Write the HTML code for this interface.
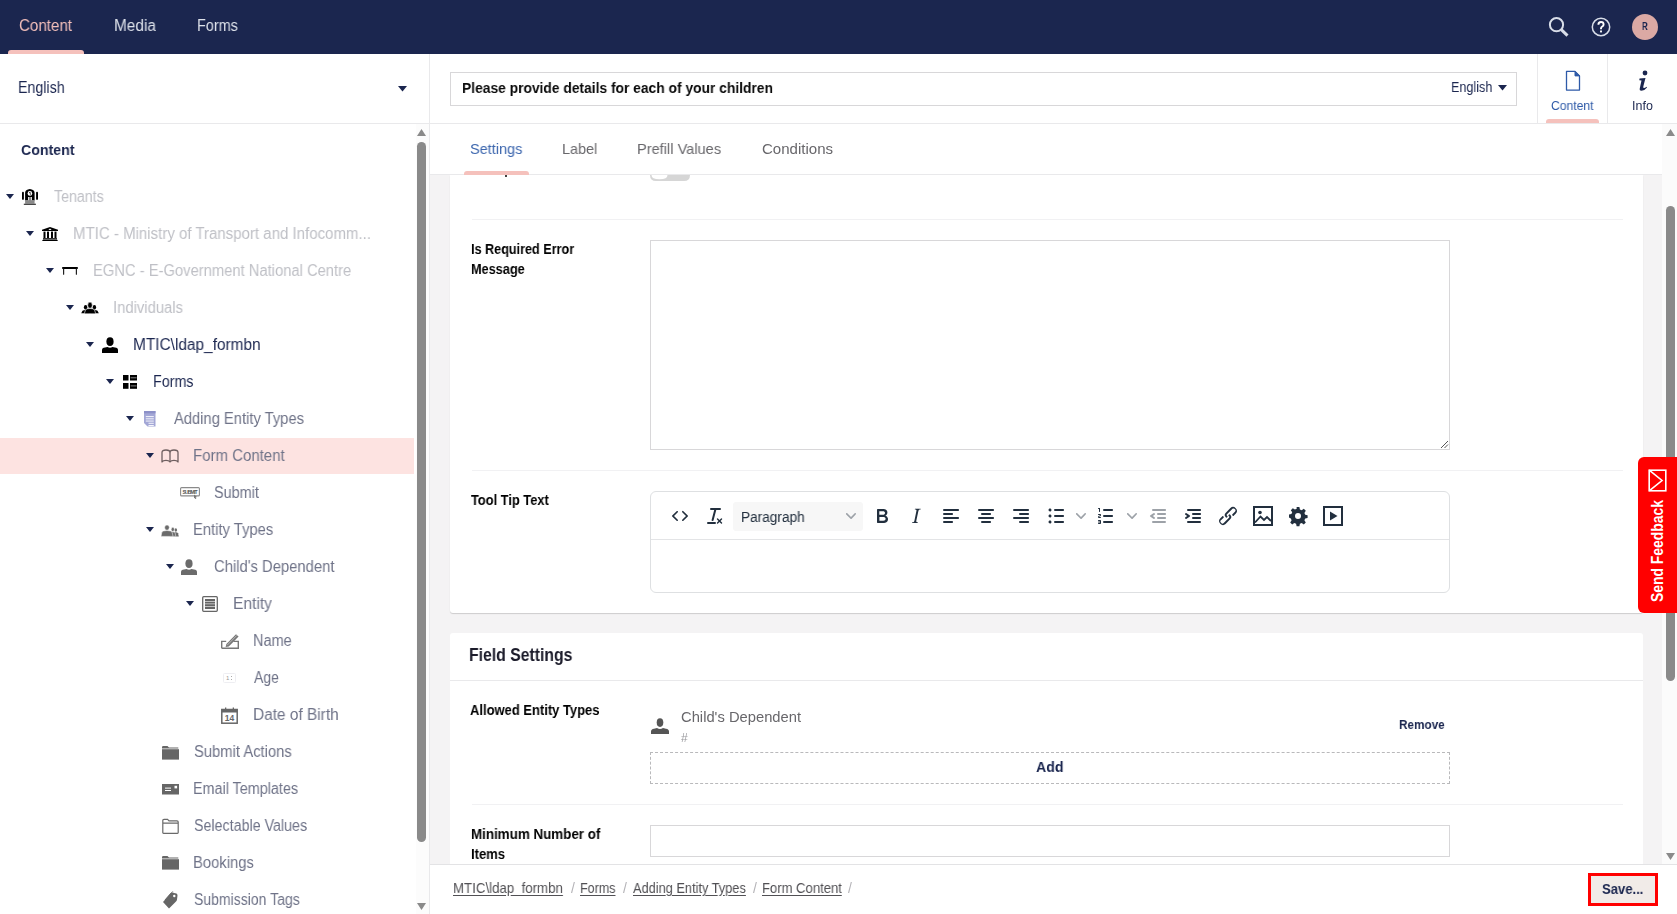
<!DOCTYPE html><html><head><meta charset="utf-8"><title>Umbraco</title><style>
    html,body{margin:0;padding:0;}
    body{width:1677px;height:914px;overflow:hidden;position:relative;background:#fff;font-family:"Liberation Sans",sans-serif;}
    .t{position:absolute;white-space:nowrap;font-family:"Liberation Sans",sans-serif;will-change:transform;}
    </style></head><body><div style="position:absolute;left:0px;top:0px;width:1677px;height:54px;background:#1b264f"></div><div style="position:absolute;left:8px;top:50px;width:76px;height:4px;background:#f5c1bc;border-radius:3px 3px 0 0"></div><div style="position:absolute;left:0px;top:123px;width:1677px;height:1px;background:#e9e9eb"></div><div style="position:absolute;left:429px;top:54px;width:1px;height:860px;background:#e9e9eb"></div><svg style="position:absolute;left:397.5px;top:86px" width="9" height="5.5" viewBox="0 0 9 5.5"><path d="M0 0H9L4.5 5.5Z" fill="#1b264f"/></svg><div style="position:absolute;left:416px;top:124px;width:13px;height:790px;background:#fcfcfc"></div><svg style="position:absolute;left:417px;top:129px" width="9" height="7" viewBox="0 0 9 7"><path d="M0 7H9L4.5 0Z" fill="#8a8a8a"/></svg><div style="position:absolute;left:417px;top:142px;width:9px;height:700px;background:#8a8a8a;border-radius:4.5px"></div><svg style="position:absolute;left:417px;top:903px" width="9" height="7" viewBox="0 0 9 7"><path d="M0 0H9L4.5 7Z" fill="#8a8a8a"/></svg><div style="position:absolute;left:0px;top:438px;width:414px;height:36px;background:#fde3e1"></div><svg style="position:absolute;left:6px;top:194px" width="8" height="5" viewBox="0 0 8 5"><path d="M0 0H8L4.0 5Z" fill="#1b264f"/></svg><svg style="position:absolute;left:26px;top:231px" width="8" height="5" viewBox="0 0 8 5"><path d="M0 0H8L4.0 5Z" fill="#1b264f"/></svg><svg style="position:absolute;left:46px;top:268px" width="8" height="5" viewBox="0 0 8 5"><path d="M0 0H8L4.0 5Z" fill="#1b264f"/></svg><svg style="position:absolute;left:66px;top:305px" width="8" height="5" viewBox="0 0 8 5"><path d="M0 0H8L4.0 5Z" fill="#1b264f"/></svg><svg style="position:absolute;left:86px;top:342px" width="8" height="5" viewBox="0 0 8 5"><path d="M0 0H8L4.0 5Z" fill="#1b264f"/></svg><svg style="position:absolute;left:106px;top:379px" width="8" height="5" viewBox="0 0 8 5"><path d="M0 0H8L4.0 5Z" fill="#1b264f"/></svg><svg style="position:absolute;left:126px;top:416px" width="8" height="5" viewBox="0 0 8 5"><path d="M0 0H8L4.0 5Z" fill="#1b264f"/></svg><svg style="position:absolute;left:146px;top:453px" width="8" height="5" viewBox="0 0 8 5"><path d="M0 0H8L4.0 5Z" fill="#1b264f"/></svg><svg style="position:absolute;left:146px;top:527px" width="8" height="5" viewBox="0 0 8 5"><path d="M0 0H8L4.0 5Z" fill="#1b264f"/></svg><svg style="position:absolute;left:166px;top:564px" width="8" height="5" viewBox="0 0 8 5"><path d="M0 0H8L4.0 5Z" fill="#1b264f"/></svg><svg style="position:absolute;left:186px;top:601px" width="8" height="5" viewBox="0 0 8 5"><path d="M0 0H8L4.0 5Z" fill="#1b264f"/></svg><div style="position:absolute;left:450px;top:72px;width:1067px;height:34px;border:1px solid #d8d7d9;box-sizing:border-box;background:#fff"></div><svg style="position:absolute;left:1498px;top:85px" width="9" height="5.5" viewBox="0 0 9 5.5"><path d="M0 0H9L4.5 5.5Z" fill="#1b264f"/></svg><div style="position:absolute;left:1537px;top:54px;width:1px;height:69px;background:#e9e9eb"></div><div style="position:absolute;left:1607px;top:54px;width:1px;height:69px;background:#e9e9eb"></div><div style="position:absolute;left:1546px;top:119px;width:53px;height:4px;background:#f5c1bc;border-radius:3px 3px 0 0"></div><svg style="position:absolute;left:1565px;top:70px" width="16" height="22" viewBox="0 0 16 22"><path d="M1.5 1.4H10L14.5 5.9V20.1H1.5Z" fill="none" stroke="#2e5aa8" stroke-width="1.3" stroke-linejoin="round"/><path d="M10 1.4V5.9H14.5Z" fill="#2e5aa8" stroke="#2e5aa8" stroke-width="1"/></svg><svg style="position:absolute;left:1636px;top:70px" width="14" height="22" viewBox="0 0 14 22"><circle cx="9" cy="3" r="2.4" fill="#1b264f"/><path d="M3.5 8.5L9.5 8L7.3 16.5Q7 18 8 18Q9 18 10.5 16.8L11 17.5Q8.5 20.8 5.5 20.8Q3.2 20.8 3.8 18.3L5.5 10.6L3.3 10.3Z" fill="#1b264f"/></svg><div style="position:absolute;left:430px;top:174px;width:1232px;height:1px;background:#e9e9eb"></div><div style="position:absolute;left:464px;top:171px;width:65px;height:4px;background:#f5c1bc;border-radius:3px 3px 0 0"></div><div style="position:absolute;left:430px;top:175px;width:1232px;height:689px;background:#f4f3f4"></div><div style="position:absolute;left:450px;top:175px;width:1193px;height:438px;background:#fff;border-radius:0 0 3px 3px;box-shadow:0 1px 1px rgba(0,0,0,.16)"></div><svg style="position:absolute;left:650px;top:175px" width="40" height="6" viewBox="0 0 40 6"><path d="M0 0H40Q40 6 34 6H6Q0 6 0 0Z" fill="#d6d6d6"/><path d="M1.5 0Q1.5 4.3 9.5 4.3Q17.5 4.3 17.5 0Z" fill="#fff"/></svg><div style="position:absolute;left:505px;top:175px;width:2px;height:2px;background:#000;border-radius:1px"></div><div style="position:absolute;left:472px;top:219px;width:1151px;height:1px;background:#f1f1f3"></div><div style="position:absolute;left:650px;top:240px;width:800px;height:210px;border:1px solid #d8d7d9;box-sizing:border-box"></div><svg style="position:absolute;left:1440px;top:440px" width="9" height="9" viewBox="0 0 9 9"><path d="M1 8L8 1M4.5 8L8 4.5" stroke="#555" stroke-width="1"/></svg><div style="position:absolute;left:472px;top:470px;width:1151px;height:1px;background:#f1f1f3"></div><div style="position:absolute;left:650px;top:491px;width:800px;height:102px;border:1px solid #dee0e2;box-sizing:border-box;border-radius:6px"></div><div style="position:absolute;left:651px;top:539px;width:798px;height:1px;background:#e3e4e6"></div><div style="position:absolute;left:733px;top:502px;width:130px;height:29px;background:#f7f7f7;border-radius:3px"></div><div style="position:absolute;left:450px;top:633px;width:1193px;height:240px;background:#fff;border-radius:3px"></div><div style="position:absolute;left:450px;top:680px;width:1193px;height:1px;background:#e9e9eb"></div><svg style="position:absolute;left:651px;top:718px" width="18" height="16" viewBox="0 0 18 16"><ellipse cx="9" cy="4.6" rx="3.3" ry="4.3" fill="#555"/><path d="M0 16V13.5Q0 11.3 3 10.8L6 10Q9 11.8 12 10L15 10.8Q18 11.3 18 13.5V16Z" fill="#555"/></svg><div style="position:absolute;left:650px;top:752px;width:800px;height:32px;border:1px dashed #b9b9bb;box-sizing:border-box"></div><div style="position:absolute;left:472px;top:804px;width:1151px;height:1px;background:#f1f1f3"></div><div style="position:absolute;left:650px;top:825px;width:800px;height:32px;border:1px solid #d8d7d9;box-sizing:border-box"></div><div style="position:absolute;left:1662px;top:124px;width:15px;height:740px;background:#fbfbfb"></div><svg style="position:absolute;left:1666px;top:129px" width="9" height="7" viewBox="0 0 9 7"><path d="M0 7H9L4.5 0Z" fill="#8a8a8a"/></svg><div style="position:absolute;left:1666px;top:206px;width:9px;height:475px;background:#8a8a8a;border-radius:4.5px"></div><svg style="position:absolute;left:1666px;top:853px" width="9" height="7" viewBox="0 0 9 7"><path d="M0 0H9L4.5 7Z" fill="#8a8a8a"/></svg><div style="position:absolute;left:430px;top:864px;width:1247px;height:50px;background:#fff"></div><div style="position:absolute;left:430px;top:864px;width:1247px;height:1px;background:#e3e3e5"></div><div style="position:absolute;left:1588px;top:873px;width:70px;height:33px;border:3px solid #f00;box-sizing:border-box;background:#f1ebe8"></div><div style="position:absolute;left:1638px;top:457px;width:39px;height:156px;background:#ff0000;border-radius:6px 0 0 6px"></div><svg style="position:absolute;left:1648px;top:469px" width="20" height="23" viewBox="0 0 20 23"><rect x="1.2" y="1.2" width="16.6" height="20.6" fill="none" stroke="#fff" stroke-width="1.6"/><path d="M1.2 1.2L14 11.5L1.2 21.8" fill="none" stroke="#fff" stroke-width="1.6"/></svg><div style="position:absolute;left:1649px;top:602px;transform:rotate(-90deg) scaleX(0.8420);transform-origin:0 0;font:700 16.5px/16.5px 'Liberation Sans',sans-serif;color:#fff;white-space:nowrap;">Send Feedback</div><svg style="position:absolute;left:1547px;top:15px" width="24" height="24" viewBox="0 0 24 24"><circle cx="9.5" cy="9.7" r="6.6" fill="none" stroke="#d8dde8" stroke-width="2"/><path d="M14.3 14.6L20.5 20.6" stroke="#d8dde8" stroke-width="3"/></svg><svg style="position:absolute;left:1591px;top:17px" width="20" height="20" viewBox="0 0 20 20"><circle cx="10" cy="10" r="8.7" fill="none" stroke="#d8dde8" stroke-width="1.5"/><path d="M7.4 7.8Q7.4 5 10 5Q12.6 5 12.6 7.4Q12.6 8.7 11.2 9.5Q10 10.2 10 11.6V12.3" fill="none" stroke="#fff" stroke-width="1.9"/><rect x="9.05" y="13.5" width="1.9" height="1.9" fill="#fff"/></svg><div style="position:absolute;left:1632px;top:14px;width:26px;height:26px;background:#dba9a4;border-radius:50%"></div><svg style="position:absolute;left:22px;top:189px" width="16" height="16" viewBox="0 0 16 16"><rect x="0" y="2.8" width="1.9" height="8" rx=".9" fill="#000"/><rect x="14.1" y="2.8" width="1.9" height="8" rx=".9" fill="#000"/><path d="M3.1 11.5V4Q3.1 1.3 6 .6L7.85 0L9.7 .6Q12.6 1.3 12.6 4V11.5Z" fill="#000"/><circle cx="7.9" cy="4.4" r="2.3" fill="#fff"/><path d="M7 3.5Q8.9 3 8.2 4.4Q7.6 5.4 9 5.4" stroke="#000" stroke-width=".7" fill="none"/><rect x="6" y="8" width=".9" height="3.6" fill="#fff"/><rect x="9.1" y="8" width=".9" height="3.6" fill="#fff"/><rect x="6.9" y="8" width="2.2" height="3.6" fill="#888"/><rect x="3.1" y="11.3" width="9.5" height="3.4" fill="#8a8a8a"/><rect x="1.8" y="14.7" width="12.1" height="1.2" fill="#333"/></svg><svg style="position:absolute;left:42px;top:227px" width="16" height="14" viewBox="0 0 16 14"><path d="M0 2.8L8 0L16 2.8V4H0Z" fill="#000"/><ellipse cx="8" cy="2.3" rx="1.4" ry=".6" fill="#fff"/><rect x="1.5" y="4.6" width="2" height="6.4" fill="#000"/><rect x="5" y="4.6" width="2" height="6.4" fill="#000"/><rect x="9" y="4.6" width="2" height="6.4" fill="#000"/><rect x="12.5" y="4.6" width="2" height="6.4" fill="#000"/><rect x="1" y="11.2" width="14" height="1" fill="#000"/><path d="M1 12.5H15L16 14H0Z" fill="#000"/></svg><svg style="position:absolute;left:62px;top:265px" width="16" height="12" viewBox="0 0 16 12"><rect x="0.1" y="1.9" width="15.8" height="2" rx=".6" fill="#000"/><rect x="1" y="3.5" width="1.2" height="6.2" rx=".5" fill="#222"/><rect x="13.8" y="3.5" width="1.2" height="6.2" rx=".5" fill="#222"/></svg><svg style="position:absolute;left:81px;top:302px" width="18" height="12" viewBox="0 0 18 12"><ellipse cx="4.6" cy="5.3" rx="1.7" ry="2.4" fill="#000"/><ellipse cx="13.4" cy="5.3" rx="1.7" ry="2.4" fill="#000"/><path d="M.2 11.2L1.5 8.8Q2.5 7.9 4.6 7.9Q6.7 7.9 7.5 8.8L8.3 11.2Z" fill="#000"/><path d="M17.8 11.2L16.5 8.8Q15.5 7.9 13.4 7.9Q11.3 7.9 10.5 8.8L9.7 11.2Z" fill="#000"/><ellipse cx="9" cy="3.2" rx="2.3" ry="3.1" fill="#000" stroke="#fff" stroke-width=".6"/><path d="M3.3 11.8L4.5 7.8Q5.5 6.5 9 6.5Q12.5 6.5 13.5 7.8L14.7 11.8Z" fill="#000" stroke="#fff" stroke-width=".6"/></svg><svg style="position:absolute;left:102px;top:337px" width="16" height="16" viewBox="0 0 16 16"><ellipse cx="8" cy="4.6" rx="3.6" ry="4.4" fill="#000"/><path d="M0 16V13.2Q0 11 3 10.6L5.5 10Q8 11.6 10.5 10L13 10.6Q16 11 16 13.2V16Z" fill="#000"/></svg><svg style="position:absolute;left:123px;top:375px" width="14" height="14" viewBox="0 0 14 14"><rect x="0" y="0" width="5.5" height="5.5" fill="#000"/><rect x="0" y="8" width="5.5" height="5.8" fill="#000"/><rect x="7" y="0" width="7" height="5.5" fill="#000"/><rect x="7" y="8" width="7" height="5.8" fill="#000"/><rect x="7.6" y="2.3" width="6" height="1" fill="#888"/><rect x="7.6" y="10.4" width="6" height="1" fill="#888"/></svg><svg style="position:absolute;left:144px;top:411px" width="12" height="16" viewBox="0 0 12 16"><path d="M0 0H11.5V15.6H3.5L0 12Z" fill="#a3a7d6"/><rect x="0" y="0" width="11.5" height="2.3" fill="#8c90c8"/><rect x="1.8" y="5.2" width="8" height=".9" fill="#fff"/><rect x="1.8" y="7.4" width="8" height=".9" fill="#fff"/><rect x="1.8" y="9.6" width="8" height=".9" fill="#fff"/><rect x="4.5" y="11.8" width="5.3" height=".9" fill="#fff"/><rect x="4.5" y="14" width="5.3" height=".9" fill="#fff"/></svg><svg style="position:absolute;left:161px;top:449px" width="18" height="14" viewBox="0 0 18 14"><path d="M1 13V3.5Q1 1 5 1Q9 1 9 3.5Q9 1 13 1Q17 1 17 3.5V13Q16 11.4 13 11.4Q10 11.4 9 13Q8 11.4 5 11.4Q2 11.4 1 13Z" fill="none" stroke="#6e5f60" stroke-width="1.3" stroke-linejoin="round"/><path d="M9 3.5V12.6" stroke="#6e5f60" stroke-width="1.3"/></svg><svg style="position:absolute;left:180px;top:487px" width="20" height="12" viewBox="0 0 20 12"><rect x=".6" y=".6" width="18.8" height="8.3" rx="1" fill="none" stroke="#8a8a8a" stroke-width="1.1"/><text x="10" y="6.6" font-size="5" font-family="Liberation Sans" font-weight="700" text-anchor="middle" fill="#555" textLength="15">SUBMIT</text><path d="M14 7.5L17 10L15.6 10.4L16.4 12L15.5 12.3L14.8 10.8L14 11.6Z" fill="#777"/></svg><svg style="position:absolute;left:161px;top:525px" width="18" height="12" viewBox="0 0 18 12"><ellipse cx="14.8" cy="5" rx="1.3" ry="1.8" fill="#6b6b6b"/><path d="M12 11.4L12.5 8.3Q13 7.3 14.8 7.3Q16.5 7.3 17 8.3L17.8 11.4Z" fill="#6b6b6b"/><ellipse cx="11.8" cy="4.4" rx="1.6" ry="2.1" fill="#6b6b6b" stroke="#fff" stroke-width=".5"/><path d="M8.8 11.4L9.5 7.9Q10.1 6.8 11.8 6.8Q13.5 6.8 14.1 7.9L14.8 11.4Z" fill="#6b6b6b" stroke="#fff" stroke-width=".5"/><ellipse cx="6" cy="2.6" rx="2.3" ry="2.6" fill="#6b6b6b" stroke="#fff" stroke-width=".5"/><path d="M0 11.4L.8 7.4Q1.6 5.5 6 5.5Q10.4 5.5 11.2 7.4L12 11.4Z" fill="#6b6b6b" stroke="#fff" stroke-width=".5"/></svg><svg style="position:absolute;left:181px;top:559px" width="18" height="16" viewBox="0 0 18 16"><ellipse cx="8" cy="4.6" rx="3.6" ry="4.4" fill="#6b6b6b"/><path d="M0 16V13.2Q0 11 3 10.6L5.5 10Q8 11.6 10.5 10L13 10.6Q16 11 16 13.2V16Z" fill="#6b6b6b"/></svg><svg style="position:absolute;left:202px;top:596px" width="16" height="16" viewBox="0 0 16 16"><rect x=".7" y=".7" width="14.6" height="14.6" rx="1" fill="none" stroke="#666" stroke-width="1.3"/><rect x="3" y="3" width="10" height="10" fill="#666"/><rect x="3" y="5.2" width="10" height=".6" fill="#fff"/><rect x="3" y="7.6" width="10" height=".6" fill="#fff"/><rect x="3" y="10" width="10" height=".6" fill="#fff"/></svg><svg style="position:absolute;left:221px;top:633px" width="18" height="16" viewBox="0 0 18 16"><path d="M.7 15.3V8.4H5.2M12.5 8.4H17.3V15.3H.7" fill="none" stroke="#777" stroke-width="1.4"/><path d="M4.6 14L5.4 11L15 1.2L17.6 3.6L7.8 13.4Z" fill="#777"/><path d="M6.2 12.2L15.8 2.4" stroke="#fff" stroke-width=".5"/></svg><svg style="position:absolute;left:223px;top:673px" width="13" height="10" viewBox="0 0 13 10"><rect x=".5" y=".5" width="12" height="9" rx="1" fill="#fff" stroke="#eeeef2"/><text x="3" y="7.3" font-size="6" font-family="Liberation Sans" fill="#999">1</text><rect x="8" y="3" width="1" height="1" fill="#aaa"/><rect x="8" y="6" width="1" height="1" fill="#aaa"/></svg><svg style="position:absolute;left:221px;top:707px" width="17" height="17" viewBox="0 0 17 17"><rect x=".8" y="2.5" width="15.4" height="13.7" fill="none" stroke="#666" stroke-width="1.5"/><rect x=".8" y="2.5" width="15.4" height="3" fill="#666"/><rect x="4" y="0.5" width="1.3" height="4" fill="#666"/><rect x="11.7" y="0.5" width="1.3" height="4" fill="#666"/><text x="8.5" y="14.4" font-size="8.5" font-family="Liberation Sans" font-weight="700" text-anchor="middle" fill="#666">14</text></svg><svg style="position:absolute;left:162px;top:745px" width="17" height="15" viewBox="0 0 17 15"><path d="M0 2.2Q0 1 1.2 1H5.5L7 2.4H16.3V3.4H0Z" fill="#666"/><rect x="0" y="4.2" width="17" height="10.4" fill="#666"/></svg><svg style="position:absolute;left:162px;top:784px" width="17" height="11" viewBox="0 0 17 11"><rect x="0" y="0" width="17" height="10.5" fill="#666"/><rect x="3" y="3.6" width="6" height="1" fill="#fff"/><rect x="3" y="6" width="6" height="1" fill="#fff"/><rect x="12.5" y="1.8" width="2.6" height="2.6" fill="#fff"/></svg><svg style="position:absolute;left:162px;top:818px" width="17" height="16" viewBox="0 0 17 16"><path d="M.8 14.6V2.6Q.8 1.4 2 1.4H5.6L7 2.8H15Q16.2 2.8 16.2 4V14.6Q16.2 15.3 15.5 15.3H1.5Q.8 15.3 .8 14.6ZM.8 5.2H16.2" fill="none" stroke="#6a6a6a" stroke-width="1.2"/></svg><svg style="position:absolute;left:162px;top:855px" width="17" height="15" viewBox="0 0 17 15"><path d="M0 2.2Q0 1 1.2 1H5.5L7 2.4H16.3V3.4H0Z" fill="#666"/><rect x="0" y="4.2" width="17" height="10.4" fill="#666"/></svg><svg style="position:absolute;left:162px;top:891px" width="16" height="18" viewBox="0 0 16 18"><path d="M1 11L8.5 2.5Q9.5 1.5 11 1.8L14.5 2.5Q15.5 3 15.5 4.5L15 8.5Q15 9.5 14 10.5L7 17.5Z" fill="#666"/><circle cx="12.3" cy="5" r="1.2" fill="#fff"/><path d="M3 9L9.5 1.5Q10.3 .8 11.2 1" stroke="#666" stroke-width="1" fill="none"/></svg><svg style="position:absolute;left:668px;top:504px" width="24" height="24" viewBox="0 0 24 24" fill="#222f3e"><path d="M9.8 15.7c.3.3.3.8 0 1-.3.4-.9.4-1.2 0l-4.4-4.1a.8.8 0 0 1 0-1.2l4.4-4.2c.3-.3.9-.3 1.2 0 .3.3.3.8 0 1.1L6 12l3.8 3.7zM14.2 15.7c-.3.3-.3.8 0 1 .4.4.9.4 1.2 0l4.4-4.1c.3-.3.3-.9 0-1.2l-4.4-4.2a.8.8 0 0 0-1.2 0c-.3.3-.3.8 0 1.1L18 12l-3.8 3.7z"/></svg><svg style="position:absolute;left:702.5px;top:504px" width="24" height="24" viewBox="0 0 24 24" fill="#222f3e"><path d="M13.2 6a1 1 0 0 1 0 .2l-2.6 10a1 1 0 0 1-1 .8h-.2a.8.8 0 0 1-.8-1l2.6-10H8a1 1 0 1 1 0-2h9a1 1 0 0 1 0 2h-3.8zM5 18h7a1 1 0 0 1 0 2H5a1 1 0 0 1 0-2zm13 1.5L16.5 18 15 19.5a.7.7 0 0 1-1-1l1.5-1.5-1.5-1.5a.7.7 0 0 1 1-1l1.5 1.5 1.5-1.5a.7.7 0 0 1 1 1L17.5 17l1.5 1.5a.7.7 0 0 1-1 1z"/></svg><svg style="position:absolute;left:869.5px;top:504px" width="24" height="24" viewBox="0 0 24 24" fill="#222f3e"><path d="M7.8 19c-.3 0-.5 0-.6-.2l-.2-.5V5.7c0-.2 0-.4.2-.5l.6-.2h5c1.5 0 2.7.3 3.5 1 .7.6 1.1 1.4 1.1 2.5a3 3 0 0 1-.6 1.9c-.4.6-1 1-1.6 1.2.4.1.9.3 1.3.6s.8.7 1 1.2c.4.4.5 1 .5 1.6 0 1.3-.4 2.3-1.3 3-.8.7-2.1 1-3.8 1H7.8zm5-8.3c.6 0 1.2-.1 1.6-.5.4-.3.6-.7.6-1.3 0-1.1-.8-1.7-2.3-1.7H9.3v3.5h3.4zm.5 6c.7 0 1.3-.1 1.7-.4.4-.4.6-.9.6-1.5s-.2-1-.7-1.4c-.4-.3-1-.4-2-.4H9.4v3.8h4z"/></svg><svg style="position:absolute;left:904px;top:504px" width="24" height="24" viewBox="0 0 24 24" fill="#222f3e"><path d="M16.7 4.7l-.1.9h-.3c-.6 0-1 0-1.4.3-.3.3-.4.6-.5 1.1l-2.1 9.8v.6c0 .5.4.8 1.4.8h.2l-.2.8H8l.2-.8h.2c1.1 0 1.8-.5 2-1.5l2-9.8.1-.5c0-.6-.4-.8-1.4-.8h-.3l.2-.9h5.8z"/></svg><svg style="position:absolute;left:939px;top:504px" width="24" height="24" viewBox="0 0 24 24" fill="#222f3e"><path d="M5 5h14c.6 0 1 .4 1 1s-.4 1-1 1H5a1 1 0 1 1 0-2zm0 4h8c.6 0 1 .4 1 1s-.4 1-1 1H5a1 1 0 1 1 0-2zm0 8h8c.6 0 1 .4 1 1s-.4 1-1 1H5a1 1 0 0 1 0-2zm0-4h14c.6 0 1 .4 1 1s-.4 1-1 1H5a1 1 0 0 1 0-2z"/></svg><svg style="position:absolute;left:974px;top:504px" width="24" height="24" viewBox="0 0 24 24" fill="#222f3e"><path d="M5 5h14c.6 0 1 .4 1 1s-.4 1-1 1H5a1 1 0 1 1 0-2zm3 4h8c.6 0 1 .4 1 1s-.4 1-1 1H8a1 1 0 1 1 0-2zm0 8h8c.6 0 1 .4 1 1s-.4 1-1 1H8a1 1 0 0 1 0-2zm-3-4h14c.6 0 1 .4 1 1s-.4 1-1 1H5a1 1 0 0 1 0-2z"/></svg><svg style="position:absolute;left:1009px;top:504px" width="24" height="24" viewBox="0 0 24 24" fill="#222f3e"><path d="M5 5h14c.6 0 1 .4 1 1s-.4 1-1 1H5a1 1 0 1 1 0-2zm6 4h8c.6 0 1 .4 1 1s-.4 1-1 1h-8a1 1 0 0 1 0-2zm0 8h8c.6 0 1 .4 1 1s-.4 1-1 1h-8a1 1 0 0 1 0-2zm-6-4h14c.6 0 1 .4 1 1s-.4 1-1 1H5a1 1 0 0 1 0-2z"/></svg><svg style="position:absolute;left:1044px;top:504px" width="24" height="24" viewBox="0 0 24 24" fill="#222f3e"><path d="M11 5h8c.6 0 1 .4 1 1s-.4 1-1 1h-8a1 1 0 0 1 0-2zm0 6h8c.6 0 1 .4 1 1s-.4 1-1 1h-8a1 1 0 0 1 0-2zm0 6h8c.6 0 1 .4 1 1s-.4 1-1 1h-8a1 1 0 0 1 0-2zM4.5 6c0-.4.1-.8.4-1 .3-.4.7-.5 1.1-.5.4 0 .8.1 1 .4.4.3.5.7.5 1.1 0 .4-.1.8-.4 1-.3.4-.7.5-1.1.5-.4 0-.8-.1-1-.4-.4-.3-.5-.7-.5-1.1zm0 6c0-.4.1-.8.4-1 .3-.4.7-.5 1.1-.5.4 0 .8.1 1 .4.4.3.5.7.5 1.1 0 .4-.1.8-.4 1-.3.4-.7.5-1.1.5-.4 0-.8-.1-1-.4-.4-.3-.5-.7-.5-1.1zm0 6c0-.4.1-.8.4-1 .3-.4.7-.5 1.1-.5.4 0 .8.1 1 .4.4.3.5.7.5 1.1 0 .4-.1.8-.4 1-.3.4-.7.5-1.1.5-.4 0-.8-.1-1-.4-.4-.3-.5-.7-.5-1.1z"/></svg><svg style="position:absolute;left:1094px;top:504px" width="24" height="24" viewBox="0 0 24 24" fill="#222f3e"><path d="M10 17h8c.6 0 1 .4 1 1s-.4 1-1 1h-8a1 1 0 0 1 0-2zm0-6h8c.6 0 1 .4 1 1s-.4 1-1 1h-8a1 1 0 0 1 0-2zm0-6h8c.6 0 1 .4 1 1s-.4 1-1 1h-8a1 1 0 1 1 0-2zM6 4v3.5c0 .3-.2.5-.5.5a.5.5 0 0 1-.5-.5V5h-.5a.5.5 0 0 1 0-1H6zm-1 8.8l.2.2h1.3c.3 0 .5.2.5.5s-.2.5-.5.5H4.9a1 1 0 0 1-.9-1V13c0-.4.3-.8.6-1l1.2-.4.2-.3a.2.2 0 0 0-.2-.2H4.5a.5.5 0 0 1-.5-.5c0-.3.2-.5.5-.5h1.6c.5 0 .9.4.9 1v.1c0 .4-.3.8-.6 1l-1.2.4-.2.3zM7 17v2c0 .6-.4 1-1 1H4.5a.5.5 0 0 1 0-1h1.2c.2 0 .3-.1.3-.3 0-.2-.1-.3-.3-.3H4.4a.4.4 0 1 1 0-.8h1.3c.2 0 .3-.1.3-.3 0-.2-.1-.3-.3-.3H4.5a.5.5 0 1 1 0-1H6c.6 0 1 .4 1 1z"/></svg><svg style="position:absolute;left:1146px;top:504px" width="24" height="24" viewBox="0 0 24 24" fill="#9da2a8"><path d="M7 5h12c.6 0 1 .4 1 1s-.4 1-1 1H7a1 1 0 1 1 0-2zm5 4h7c.6 0 1 .4 1 1s-.4 1-1 1h-7a1 1 0 0 1 0-2zm0 4h7c.6 0 1 .4 1 1s-.4 1-1 1h-7a1 1 0 0 1 0-2zm-5 4h12a1 1 0 0 1 0 2H7a1 1 0 0 1 0-2zm1.6-3.8a1 1 0 0 1-1.2 1.6l-3-2a1 1 0 0 1 0-1.6l3-2a1 1 0 0 1 1.2 1.6L6.8 12l1.8 1.2z"/></svg><svg style="position:absolute;left:1181px;top:504px" width="24" height="24" viewBox="0 0 24 24" fill="#222f3e"><path d="M7 5h12c.6 0 1 .4 1 1s-.4 1-1 1H7a1 1 0 1 1 0-2zm5 4h7c.6 0 1 .4 1 1s-.4 1-1 1h-7a1 1 0 0 1 0-2zm0 4h7c.6 0 1 .4 1 1s-.4 1-1 1h-7a1 1 0 0 1 0-2zm-5 4h12a1 1 0 0 1 0 2H7a1 1 0 0 1 0-2zm-2.6-3.8L6.2 12l-1.8-1.2a1 1 0 0 1 1.2-1.6l3 2a1 1 0 0 1 0 1.6l-3 2a1 1 0 1 1-1.2-1.6z"/></svg><svg style="position:absolute;left:1216px;top:504px" width="24" height="24" viewBox="0 0 24 24" fill="#222f3e"><path d="M6.2 12.3a1 1 0 0 1 1.4 1.4l-2.1 2a2 2 0 1 0 2.7 2.8l4.8-4.8a1 1 0 0 0 0-1.4 1 1 0 1 1 1.4-1.3 2.9 2.9 0 0 1 0 4L9.6 20a3.9 3.9 0 0 1-5.5-5.5l2-2zm11.6-.6a1 1 0 0 1-1.4-1.4l2-2a2 2 0 1 0-2.6-2.8L11 10.3a1 1 0 0 0 0 1.4A1 1 0 1 1 9.6 13a2.9 2.9 0 0 1 0-4L14.4 4a3.9 3.9 0 0 1 5.5 5.5l-2 2z"/></svg><svg style="position:absolute;left:1251px;top:504px" width="24" height="24" viewBox="0 0 24 24" fill="#222f3e"><path d="M3 3h18v18H3z" fill="none" stroke="#222f3e" stroke-width="2"/><circle cx="9" cy="8.5" r="1.8"/><path d="M4 18.5L9.5 12.5L13 16L16 13L20 17" fill="none" stroke="#222f3e" stroke-width="1.8"/></svg><svg style="position:absolute;left:1286px;top:504px" width="24" height="24" viewBox="0 0 24 24" fill="#222f3e"><path d="M10.6 3h2.8l.5 2.4 1.8.8 2.1-1.4 2 2-1.4 2.1.8 1.8 2.4.5v2.8l-2.4.5-.8 1.8 1.4 2.1-2 2-2.1-1.4-1.8.8-.5 2.4h-2.8l-.5-2.4-1.8-.8-2.1 1.4-2-2 1.4-2.1-.8-1.8L3 13.4v-2.8l2.4-.5.8-1.8-1.4-2.1 2-2 2.1 1.4 1.8-.8zM12 9a3 3 0 1 0 0 6 3 3 0 0 0 0-6z" fill-rule="evenodd"/></svg><svg style="position:absolute;left:1321px;top:504px" width="24" height="24" viewBox="0 0 24 24" fill="#222f3e"><path d="M3 3h18v18H3z" fill="none" stroke="#222f3e" stroke-width="2"/><path d="M9 7.5L16.5 12L9 16.5z"/></svg><svg style="position:absolute;left:846px;top:511px" width="10" height="10" viewBox="0 0 10 10" fill="#9da2a8"><path d="M8.7 2.2c.3-.3.8-.3 1 0 .4.4.4.9 0 1.2L5.7 7.8c-.3.3-.9.3-1.2 0L.2 3.4a.8.8 0 0 1 0-1.2c.3-.3.8-.3 1.1 0L5 6l3.7-3.8z"/></svg><svg style="position:absolute;left:1076px;top:511px" width="10" height="10" viewBox="0 0 10 10" fill="#9da2a8"><path d="M8.7 2.2c.3-.3.8-.3 1 0 .4.4.4.9 0 1.2L5.7 7.8c-.3.3-.9.3-1.2 0L.2 3.4a.8.8 0 0 1 0-1.2c.3-.3.8-.3 1.1 0L5 6l3.7-3.8z"/></svg><svg style="position:absolute;left:1127px;top:511px" width="10" height="10" viewBox="0 0 10 10" fill="#9da2a8"><path d="M8.7 2.2c.3-.3.8-.3 1 0 .4.4.4.9 0 1.2L5.7 7.8c-.3.3-.9.3-1.2 0L.2 3.4a.8.8 0 0 1 0-1.2c.3-.3.8-.3 1.1 0L5 6l3.7-3.8z"/></svg><div class="t" style="left:19.40px;top:17.76px;font-size:16px;line-height:16px;color:#f5c1bc;font-weight:400;transform:scaleX(0.9471);transform-origin:0 0;">Content</div><div class="t" style="left:113.54px;top:17.76px;font-size:16px;line-height:16px;color:#dde1ea;font-weight:400;transform:scaleX(0.9606);transform-origin:0 0;">Media</div><div class="t" style="left:197.10px;top:17.76px;font-size:16px;line-height:16px;color:#dde1ea;font-weight:400;transform:scaleX(0.9024);transform-origin:0 0;">Forms</div><div class="t" style="left:1641.50px;top:21.27px;font-size:11.5px;line-height:11.5px;color:#1b264f;font-weight:700;transform:scaleX(0.6889);transform-origin:0 0;">R</div><div class="t" style="left:17.64px;top:79.33px;font-size:16.5px;line-height:16.5px;color:#1b264f;font-weight:400;transform:scaleX(0.8614);transform-origin:0 0;">English</div><div class="t" style="left:20.50px;top:142.28px;font-size:15.5px;line-height:15.5px;color:#1b264f;font-weight:700;transform:scaleX(0.9130);transform-origin:0 0;">Content</div><div class="t" style="left:53.50px;top:188.63px;font-size:15.8px;line-height:15.8px;color:#bfc0c6;font-weight:400;transform:scaleX(0.8984);transform-origin:0 0;">Tenants</div><div class="t" style="left:72.55px;top:225.63px;font-size:15.8px;line-height:15.8px;color:#bfc0c6;font-weight:400;transform:scaleX(0.9509);transform-origin:0 0;">MTIC - Ministry of Transport and Infocomm...</div><div class="t" style="left:92.57px;top:262.63px;font-size:15.8px;line-height:15.8px;color:#bfc0c6;font-weight:400;transform:scaleX(0.9338);transform-origin:0 0;">EGNC - E-Government National Centre</div><div class="t" style="left:112.56px;top:299.63px;font-size:15.8px;line-height:15.8px;color:#bfc0c6;font-weight:400;transform:scaleX(0.9370);transform-origin:0 0;">Individuals</div><div class="t" style="left:132.52px;top:336.63px;font-size:15.8px;line-height:15.8px;color:#1b264f;font-weight:400;transform:scaleX(0.9758);transform-origin:0 0;">MTIC\ldap_formbn</div><div class="t" style="left:152.59px;top:373.63px;font-size:15.8px;line-height:15.8px;color:#1b264f;font-weight:400;transform:scaleX(0.9053);transform-origin:0 0;">Forms</div><div class="t" style="left:173.50px;top:410.63px;font-size:15.8px;line-height:15.8px;color:#6f7388;font-weight:400;transform:scaleX(0.9326);transform-origin:0 0;">Adding Entity Types</div><div class="t" style="left:192.55px;top:447.63px;font-size:15.8px;line-height:15.8px;color:#6f7388;font-weight:400;transform:scaleX(0.9492);transform-origin:0 0;">Form Content</div><div class="t" style="left:213.50px;top:484.63px;font-size:15.8px;line-height:15.8px;color:#6f7388;font-weight:400;transform:scaleX(0.9141);transform-origin:0 0;">Submit</div><div class="t" style="left:192.56px;top:521.63px;font-size:15.8px;line-height:15.8px;color:#6f7388;font-weight:400;transform:scaleX(0.9361);transform-origin:0 0;">Entity Types</div><div class="t" style="left:213.50px;top:558.63px;font-size:15.8px;line-height:15.8px;color:#6f7388;font-weight:400;transform:scaleX(0.9365);transform-origin:0 0;">Child's Dependent</div><div class="t" style="left:232.51px;top:595.63px;font-size:15.8px;line-height:15.8px;color:#6f7388;font-weight:400;transform:scaleX(0.9868);transform-origin:0 0;">Entity</div><div class="t" style="left:252.58px;top:632.63px;font-size:15.8px;line-height:15.8px;color:#6f7388;font-weight:400;transform:scaleX(0.9189);transform-origin:0 0;">Name</div><div class="t" style="left:253.50px;top:669.63px;font-size:15.8px;line-height:15.8px;color:#6f7388;font-weight:400;transform:scaleX(0.8862);transform-origin:0 0;">Age</div><div class="t" style="left:252.52px;top:706.63px;font-size:15.8px;line-height:15.8px;color:#6f7388;font-weight:400;transform:scaleX(0.9766);transform-origin:0 0;">Date of Birth</div><div class="t" style="left:193.50px;top:743.63px;font-size:15.8px;line-height:15.8px;color:#6f7388;font-weight:400;transform:scaleX(0.9359);transform-origin:0 0;">Submit Actions</div><div class="t" style="left:192.59px;top:780.63px;font-size:15.8px;line-height:15.8px;color:#6f7388;font-weight:400;transform:scaleX(0.9088);transform-origin:0 0;">Email Templates</div><div class="t" style="left:193.50px;top:817.63px;font-size:15.8px;line-height:15.8px;color:#6f7388;font-weight:400;transform:scaleX(0.9028);transform-origin:0 0;">Selectable Values</div><div class="t" style="left:192.56px;top:854.63px;font-size:15.8px;line-height:15.8px;color:#6f7388;font-weight:400;transform:scaleX(0.9378);transform-origin:0 0;">Bookings</div><div class="t" style="left:193.50px;top:891.63px;font-size:15.8px;line-height:15.8px;color:#6f7388;font-weight:400;transform:scaleX(0.8878);transform-origin:0 0;">Submission Tags</div><div class="t" style="left:461.61px;top:79.78px;font-size:15.5px;line-height:15.5px;color:#0b0b0b;font-weight:700;transform:scaleX(0.8912);transform-origin:0 0;">Please provide details for each of your children</div><div class="t" style="left:1451.19px;top:79.38px;font-size:15.5px;line-height:15.5px;color:#1b264f;font-weight:400;transform:scaleX(0.8127);transform-origin:0 0;">English</div><div class="t" style="left:1551.00px;top:100.22px;font-size:12.5px;line-height:12.5px;color:#2e5aa8;font-weight:400;transform:scaleX(0.9705);transform-origin:0 0;">Content</div><div class="t" style="left:1631.60px;top:100.22px;font-size:12.5px;line-height:12.5px;color:#1b264f;font-weight:400;">Info</div><div class="t" style="left:470.40px;top:140.90px;font-size:15px;line-height:15px;color:#3c66ae;font-weight:400;transform:scaleX(0.9665);transform-origin:0 0;">Settings</div><div class="t" style="left:562.34px;top:140.90px;font-size:15px;line-height:15px;color:#68676b;font-weight:400;transform:scaleX(0.9613);transform-origin:0 0;">Label</div><div class="t" style="left:637.33px;top:140.90px;font-size:15px;line-height:15px;color:#68676b;font-weight:400;transform:scaleX(0.9726);transform-origin:0 0;">Prefill Values</div><div class="t" style="left:761.80px;top:140.90px;font-size:15px;line-height:15px;color:#68676b;font-weight:400;transform:scaleX(1.0032);transform-origin:0 0;">Conditions</div><div class="t" style="left:470.50px;top:241.98px;font-size:14.2px;line-height:14.2px;color:#000;font-weight:700;transform:scaleX(0.8894);transform-origin:0 0;">Is Required Error</div><div class="t" style="left:470.50px;top:261.98px;font-size:14.2px;line-height:14.2px;color:#000;font-weight:700;transform:scaleX(0.8960);transform-origin:0 0;">Message</div><div class="t" style="left:470.50px;top:492.98px;font-size:14.2px;line-height:14.2px;color:#000;font-weight:700;transform:scaleX(0.9051);transform-origin:0 0;">Tool Tip Text</div><div class="t" style="left:740.63px;top:510.05px;font-size:14px;line-height:14px;color:#222f3e;font-weight:400;transform:scaleX(0.9750);transform-origin:0 0;">Paragraph</div><div class="t" style="left:469.32px;top:646.16px;font-size:18px;line-height:18px;color:#1b1b2a;font-weight:700;transform:scaleX(0.8761);transform-origin:0 0;">Field Settings</div><div class="t" style="left:470.20px;top:702.68px;font-size:14.2px;line-height:14.2px;color:#000;font-weight:700;transform:scaleX(0.9143);transform-origin:0 0;">Allowed Entity Types</div><div class="t" style="left:680.70px;top:710.36px;font-size:14.7px;line-height:14.7px;color:#68676b;font-weight:400;transform:scaleX(1.0043);transform-origin:0 0;">Child's Dependent</div><div class="t" style="left:680.50px;top:731.64px;font-size:12px;line-height:12px;color:#9a9a9e;font-weight:400;">#</div><div class="t" style="left:1399.20px;top:717.64px;font-size:13.3px;line-height:13.3px;color:#1b264f;font-weight:700;transform:scaleX(0.8843);transform-origin:0 0;">Remove</div><div class="t" style="left:1036.30px;top:759.08px;font-size:15.5px;line-height:15.5px;color:#1b264f;font-weight:700;transform:scaleX(0.9103);transform-origin:0 0;">Add</div><div class="t" style="left:470.50px;top:826.78px;font-size:14.2px;line-height:14.2px;color:#000;font-weight:700;transform:scaleX(0.9431);transform-origin:0 0;">Minimum Number of</div><div class="t" style="left:470.50px;top:846.78px;font-size:14.2px;line-height:14.2px;color:#000;font-weight:700;transform:scaleX(0.9174);transform-origin:0 0;">Items</div><div class="t" style="left:453.48px;top:881.03px;font-size:14.5px;line-height:14.5px;color:#515054;font-weight:400;transform:scaleX(0.9151);transform-origin:0 0;text-decoration:underline;text-underline-offset:2px;">MTIC\ldap_formbn</div><div class="t" style="left:571.00px;top:881.45px;font-size:14px;line-height:14px;color:#b5b4b8;font-weight:400;">/</div><div class="t" style="left:580.04px;top:881.03px;font-size:14.5px;line-height:14.5px;color:#515054;font-weight:400;transform:scaleX(0.8637);transform-origin:0 0;text-decoration:underline;text-underline-offset:2px;">Forms</div><div class="t" style="left:623.00px;top:881.45px;font-size:14px;line-height:14px;color:#b5b4b8;font-weight:400;">/</div><div class="t" style="left:632.90px;top:881.03px;font-size:14.5px;line-height:14.5px;color:#515054;font-weight:400;transform:scaleX(0.8819);transform-origin:0 0;text-decoration:underline;text-underline-offset:2px;">Adding Entity Types</div><div class="t" style="left:753.00px;top:881.45px;font-size:14px;line-height:14px;color:#b5b4b8;font-weight:400;">/</div><div class="t" style="left:761.80px;top:881.03px;font-size:14.5px;line-height:14.5px;color:#515054;font-weight:400;transform:scaleX(0.9017);transform-origin:0 0;text-decoration:underline;text-underline-offset:2px;">Form Content</div><div class="t" style="left:848.00px;top:881.45px;font-size:14px;line-height:14px;color:#b5b4b8;font-weight:400;">/</div><div class="t" style="left:1602.20px;top:881.10px;font-size:15px;line-height:15px;color:#1b264f;font-weight:700;transform:scaleX(0.8719);transform-origin:0 0;">Save...</div></body></html>
